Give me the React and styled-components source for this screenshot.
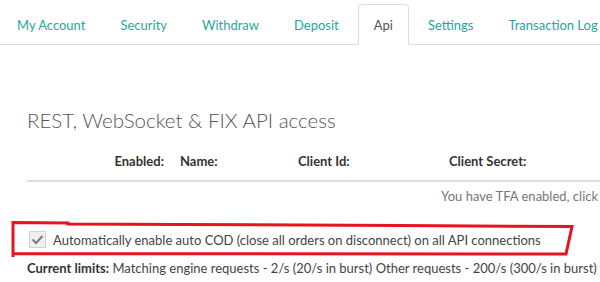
import React from "react";
import styled, { createGlobalStyle } from "styled-components";

const GlobalStyle = createGlobalStyle`
  html, body {
    margin: 0;
    overflow: hidden;
    background: #fff;
  }
  body {
    font-family: Lato, "Open Sans", sans-serif;
    font-size: 13px;
    color: #555;
  }
`;

const Page = styled.div`
  position: relative;
  width: 600px;
  height: 282px;
  overflow: hidden;
`;

const TabBar = styled.ul`
  display: flex;
  align-items: flex-end;
  height: 44px;
  margin: 0;
  padding: 0 0 0 1px;
  list-style: none;
  border-bottom: 1px solid #ddd;
  white-space: nowrap;
`;

const Tab = styled.li`
  display: flex;
  align-items: center;
  box-sizing: border-box;
  height: 41px;
  margin: 0 3px -1px 0;
  padding: 0 15px;
  border: 1px solid transparent;
  border-radius: 4px 4px 0 0;
  color: ${(p) => (p.$active ? "#555" : "#2ba59b")};
  background: ${(p) => (p.$active ? "#fff" : "transparent")};
  border-color: ${(p) => (p.$active ? "#ddd #ddd transparent" : "transparent")};
  cursor: pointer;
`;

const Content = styled.div`
  padding-left: 27px;
`;

const Title = styled.h3`
  margin: 63px 0 0;
  font-size: 20.5px;
  font-weight: 300;
  line-height: 24px;
  color: #555;
`;

const KeyTable = styled.div`
  display: grid;
  grid-template-columns: 145px 118px 151px 1fr;
  margin-top: 19px;
  line-height: 20px;
`;

const HeadCell = styled.div`
  padding: 0 8px 9px;
  font-weight: 700;
  color: #333;
  text-align: ${(p) => (p.$right ? "right" : "left")};
  border-bottom: 2px solid #ddd;
  white-space: nowrap;
`;

const Notice = styled.div`
  grid-column: 4 / -1;
  padding-top: 4px;
  color: #777;
  white-space: nowrap;
`;

const CheckRow = styled.label`
  display: flex;
  align-items: center;
  gap: 7px;
  margin-top: 24px;
  padding-left: 2px;
  line-height: 20px;
  color: #444;
  white-space: nowrap;
`;

const Box = styled.span`
  display: flex;
  align-items: center;
  justify-content: center;
  box-sizing: border-box;
  width: 17px;
  height: 17px;
  margin-top: -2px;
  border: 1px solid #d2d2d2;
  background: #efefef;
`;

const Limits = styled.p`
  margin: 8px 0 0;
  line-height: 20px;
  color: #444;
  white-space: nowrap;
  b {
    color: #333;
  }
`;

const Marker = styled.svg`
  position: absolute;
  left: 0;
  top: 0;
  pointer-events: none;
`;

const tabs = ["My Account", "Security", "Withdraw", "Deposit", "Api", "Settings", "Transaction Log"];

const App = () => (
  <>
    <GlobalStyle />
    <Page>
      <TabBar>
        {tabs.map((t) => (
          <Tab key={t} $active={t === "Api"}>
            {t}
          </Tab>
        ))}
      </TabBar>
      <Content>
        <Title>REST, WebSocket &amp; FIX API access</Title>
        <KeyTable>
          <HeadCell $right>Enabled:</HeadCell>
          <HeadCell>Name:</HeadCell>
          <HeadCell>Client Id:</HeadCell>
          <HeadCell>Client Secret:</HeadCell>
          <Notice>You have TFA enabled, click here to create new API keys</Notice>
        </KeyTable>
        <CheckRow>
          <Box>
            <svg width="13" height="11" viewBox="0 0 13 11">
              <path d="M1.5 5.5 L5 9 L11.5 2" fill="none" stroke="#7a7a7a" strokeWidth="2" />
            </svg>
          </Box>
          Automatically enable auto COD (close all orders on disconnect) on all API connections
        </CheckRow>
        <Limits>
          <b>Current limits:</b> Matching engine requests - 2/s (20/s in burst) Other requests - 200/s
          (300/s in burst)
        </Limits>
      </Content>
      <Marker width="600" height="282" viewBox="0 0 600 282">
        <path
          d="M13 257 L13 222.5 L68 223 L68 224 L180 224.5 L300 225 L400 225.5 L572 226.5 L566 254 L13 253.5"
          fill="none"
          stroke="#e6141e"
          strokeWidth="3"
        />
      </Marker>
    </Page>
  </>
);

export default App;
